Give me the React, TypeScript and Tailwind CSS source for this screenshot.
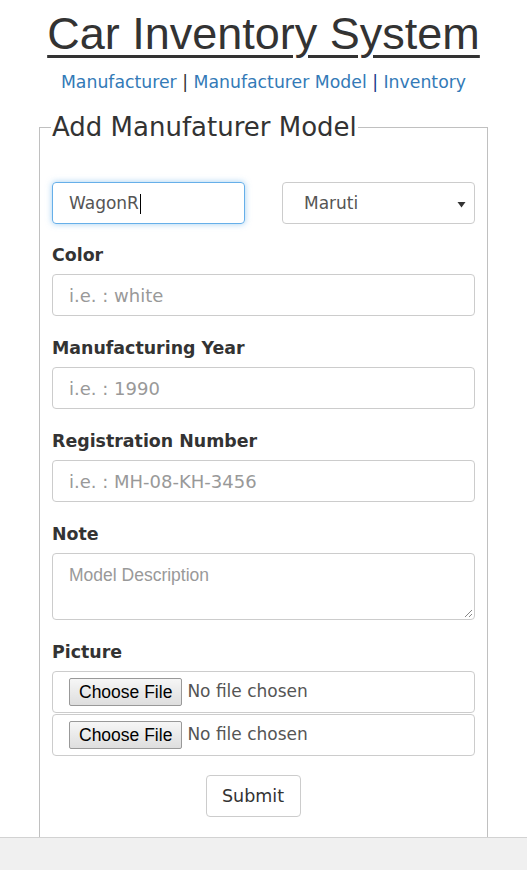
const verdana = "font-['DejaVu_Sans',Verdana,sans-serif]";
const arial = "font-['Liberation_Sans',Arial,sans-serif]";

const Field = ({ label, placeholder }: { label: string; placeholder: string }) => (
  <div className="mb-5">
    <div className="h-6 text-[17.4px] leading-6 font-bold text-[#333]">{label}</div>
    <div className="mt-[7px] h-[42px] rounded border border-[#ccc] px-4 flex items-center text-[18px] text-[#999]">
      {placeholder}
    </div>
  </div>
);

const FileBox = () => (
  <div className="h-[42px] rounded border border-[#ccc] flex items-center pl-4">
    <div
      className={`${arial} h-[28px] px-[9px] flex items-center border border-[#999] rounded-[2px] bg-gradient-to-b from-[#f6f6f6] to-[#dedede] text-[17.5px] text-black`}
    >
      Choose File
    </div>
    <span className="ml-[5px] text-[17px] text-[#555]">No file chosen</span>
  </div>
);

const App = () => {
  return (
    <div className={`${verdana} bg-white text-[#333] h-[870px] flex flex-col overflow-hidden`}>
      <h1 className={`${arial} text-center text-[45px] leading-[52px] underline decoration-[3px] underline-offset-[6px] mt-[8px]`}>
        Car Inventory System
      </h1>
      <div className="text-center text-[17.3px] mt-[10px] leading-6">
        <span className="text-[#337ab7]">Manufacturer</span>
        <span className="text-[#333]"> | </span>
        <span className="text-[#337ab7]">Manufacturer Model</span>
        <span className="text-[#1a3a8a]"> | </span>
        <span className="text-[#337ab7]">Inventory</span>
      </div>
      <div className="flex-1 flex flex-col">
        <fieldset className="mx-[39px] mt-[19px] border border-b-0 border-[#c0c0c0] px-[12px] flex-1">
          <legend className="px-[1px] text-[26px] leading-7 text-[#333] -ml-[1px]">Add Manufaturer Model</legend>
          <div className="flex justify-between mt-[41px] mb-[19px]">
            <div className="w-[193px] h-[42px] rounded border border-[#66afe9] shadow-[0_0_6px_rgba(102,175,233,0.6)] flex items-center px-4 pt-[2px] text-[17px] text-[#555]">
              WagonR
              <span className="inline-block w-px h-[20px] bg-black ml-[1px]"></span>
            </div>
            <div className="w-[193px] h-[42px] rounded border border-[#ccc] flex items-center justify-between pl-[21px] pr-[8px] pt-[2px] text-[17px] text-[#555]">
              Maruti
              <svg width="9" height="7" viewBox="0 0 9 7">
                <path d="M0.5 1 L8.5 1 L4.5 6.5 Z" fill="#333" />
              </svg>
            </div>
          </div>
          <Field label="Color" placeholder="i.e. : white" />
          <Field label="Manufacturing Year" placeholder="i.e. : 1990" />
          <Field label="Registration Number" placeholder="i.e. : MH-08-KH-3456" />
          <div className="mb-5">
            <div className="h-6 text-[17.4px] leading-6 font-bold text-[#333]">Note</div>
            <div className="relative mt-[7px] h-[67px] rounded border border-[#ccc] px-4 pt-[8px]">
              <div className={`${arial} text-[17.5px] text-[#999]`}>Model Description</div>
              <svg className="absolute right-[1px] bottom-[1px]" width="10" height="10" viewBox="0 0 10 10">
                <path d="M9 2 L2 9 M9 6 L6 9" stroke="#888" strokeWidth="1" />
              </svg>
            </div>
          </div>
          <div className="h-6 text-[17.4px] leading-6 font-bold text-[#333]">Picture</div>
          <div className="mt-[7px] flex flex-col gap-px">
            <FileBox />
            <FileBox />
          </div>
          <div className="flex justify-center mt-[19px] pr-[21px]">
            <div className="w-[95px] h-[42px] rounded border border-[#ccc] flex items-center justify-center text-[17.5px] text-[#333]">
              Submit
            </div>
          </div>
        </fieldset>
      </div>
      <div className="h-[33px] shrink-0 bg-[#f0f0f0] border-t border-[#d2d2d2]"></div>
    </div>
  );
};

export default App;
